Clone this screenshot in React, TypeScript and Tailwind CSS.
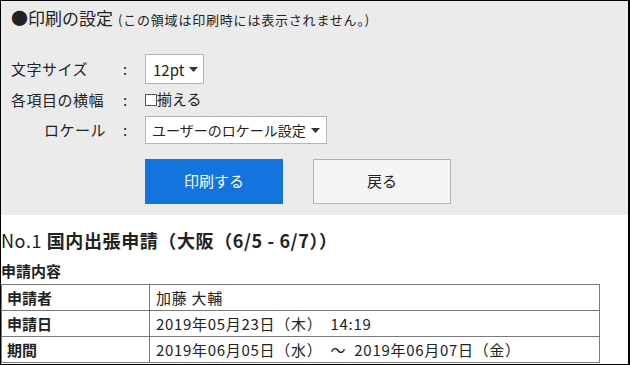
import React from "react";

const font = { fontFamily: '"Noto Sans CJK JP", "Noto Sans", sans-serif' };

function Caret() {
  return (
    <svg width="9" height="5" viewBox="0 0 9 5" className="ml-[5px] shrink-0">
      <path d="M0 0 L9 0 L4.5 5 Z" fill="#333" />
    </svg>
  );
}

function Row({ label, indent, children }: { label: string; indent?: boolean; children: React.ReactNode }) {
  return (
    <div className="flex items-center">
      <div className={"w-[110px] text-[15px] leading-[20px] tracking-[0.5px] " + (indent ? "pl-[33px]" : "")}>{label}</div>
      <div className="w-[8px] text-center text-[15px] leading-[20px]">:</div>
      <div className="ml-[16px] flex items-center">{children}</div>
    </div>
  );
}

export default function App() {
  return (
    <div
      className="w-[630px] h-[365px] overflow-hidden border-t border-l border-b border-r-2 border-black bg-white text-[#222]"
      style={font}
    >
      <div className="h-[214px] bg-[#ebebeb] pl-[10px] pt-[5px]">
        <div className="flex items-baseline h-[24px]">
          <span className="text-[17px] leading-[24px]">●印刷の設定</span>
          <span className="ml-[5px] text-[13px] leading-[24px] tracking-[0.8px]">(この領域は印刷時には表示されません。)</span>
        </div>

        <div className="mt-[24px] h-[30px] flex items-center">
          <Row label="文字サイズ">
            <div className="h-[30px] w-[59px] border border-[#b5b5b5] bg-white flex items-center pl-[7px] text-[15px] leading-none">
              12pt
              <Caret />
            </div>
          </Row>
        </div>

        <div className="h-[31px] flex items-center">
          <Row label="各項目の横幅">
            <div className="flex items-center text-[15px]">
              <span className="w-[12px] h-[12px] border border-[#555] bg-white inline-block" />
              <span>揃える</span>
            </div>
          </Row>
        </div>

        <div className="h-[30px] flex items-center">
          <Row label="ロケール" indent>
            <div className="h-[28px] w-[182px] border border-[#b5b5b5] bg-white flex items-center pl-[6px] text-[14px] leading-none whitespace-nowrap">
              ユーザーのロケール設定
              <Caret />
            </div>
          </Row>
        </div>

        <div className="mt-[14px] ml-[134px] flex gap-[30px]">
          <button className="w-[138px] h-[45px] bg-[#1274dc] text-white text-[15px]">印刷する</button>
          <button className="w-[138px] h-[45px] bg-[#f5f5f5] border border-[#b3b3b3] text-[15px]">戻る</button>
        </div>
      </div>

      <div className="pt-[12px] text-[18px] leading-[26px] tracking-[0.6px]">
        No.1 <span className="font-bold">国内出張申請（大阪（6/5 - 6/7））</span>
      </div>
      <div className="mt-[7px] text-[15px] leading-[22px] font-bold">申請内容</div>
      <table className="mt-[2px] w-[599px] border-collapse text-[15px]">
        <tbody>
          {[
            ["申請者", "加藤 大輔"],
            ["申請日", "2019年05月23日（木）  14:19"],
            ["期間", "2019年06月05日（水）  ～  2019年06月07日（金）"],
          ].map(([k, v]) => (
            <tr key={k} className="h-[26px]">
              <td className="w-[148px] border border-[#7a7a7a] pl-[5px] font-bold leading-[24px] py-0">{k}</td>
              <td className="border border-[#7a7a7a] pl-[6px] leading-[24px] py-0 whitespace-pre tracking-[0.7px]">{v}</td>
            </tr>
          ))}
        </tbody>
      </table>
    </div>
  );
}
